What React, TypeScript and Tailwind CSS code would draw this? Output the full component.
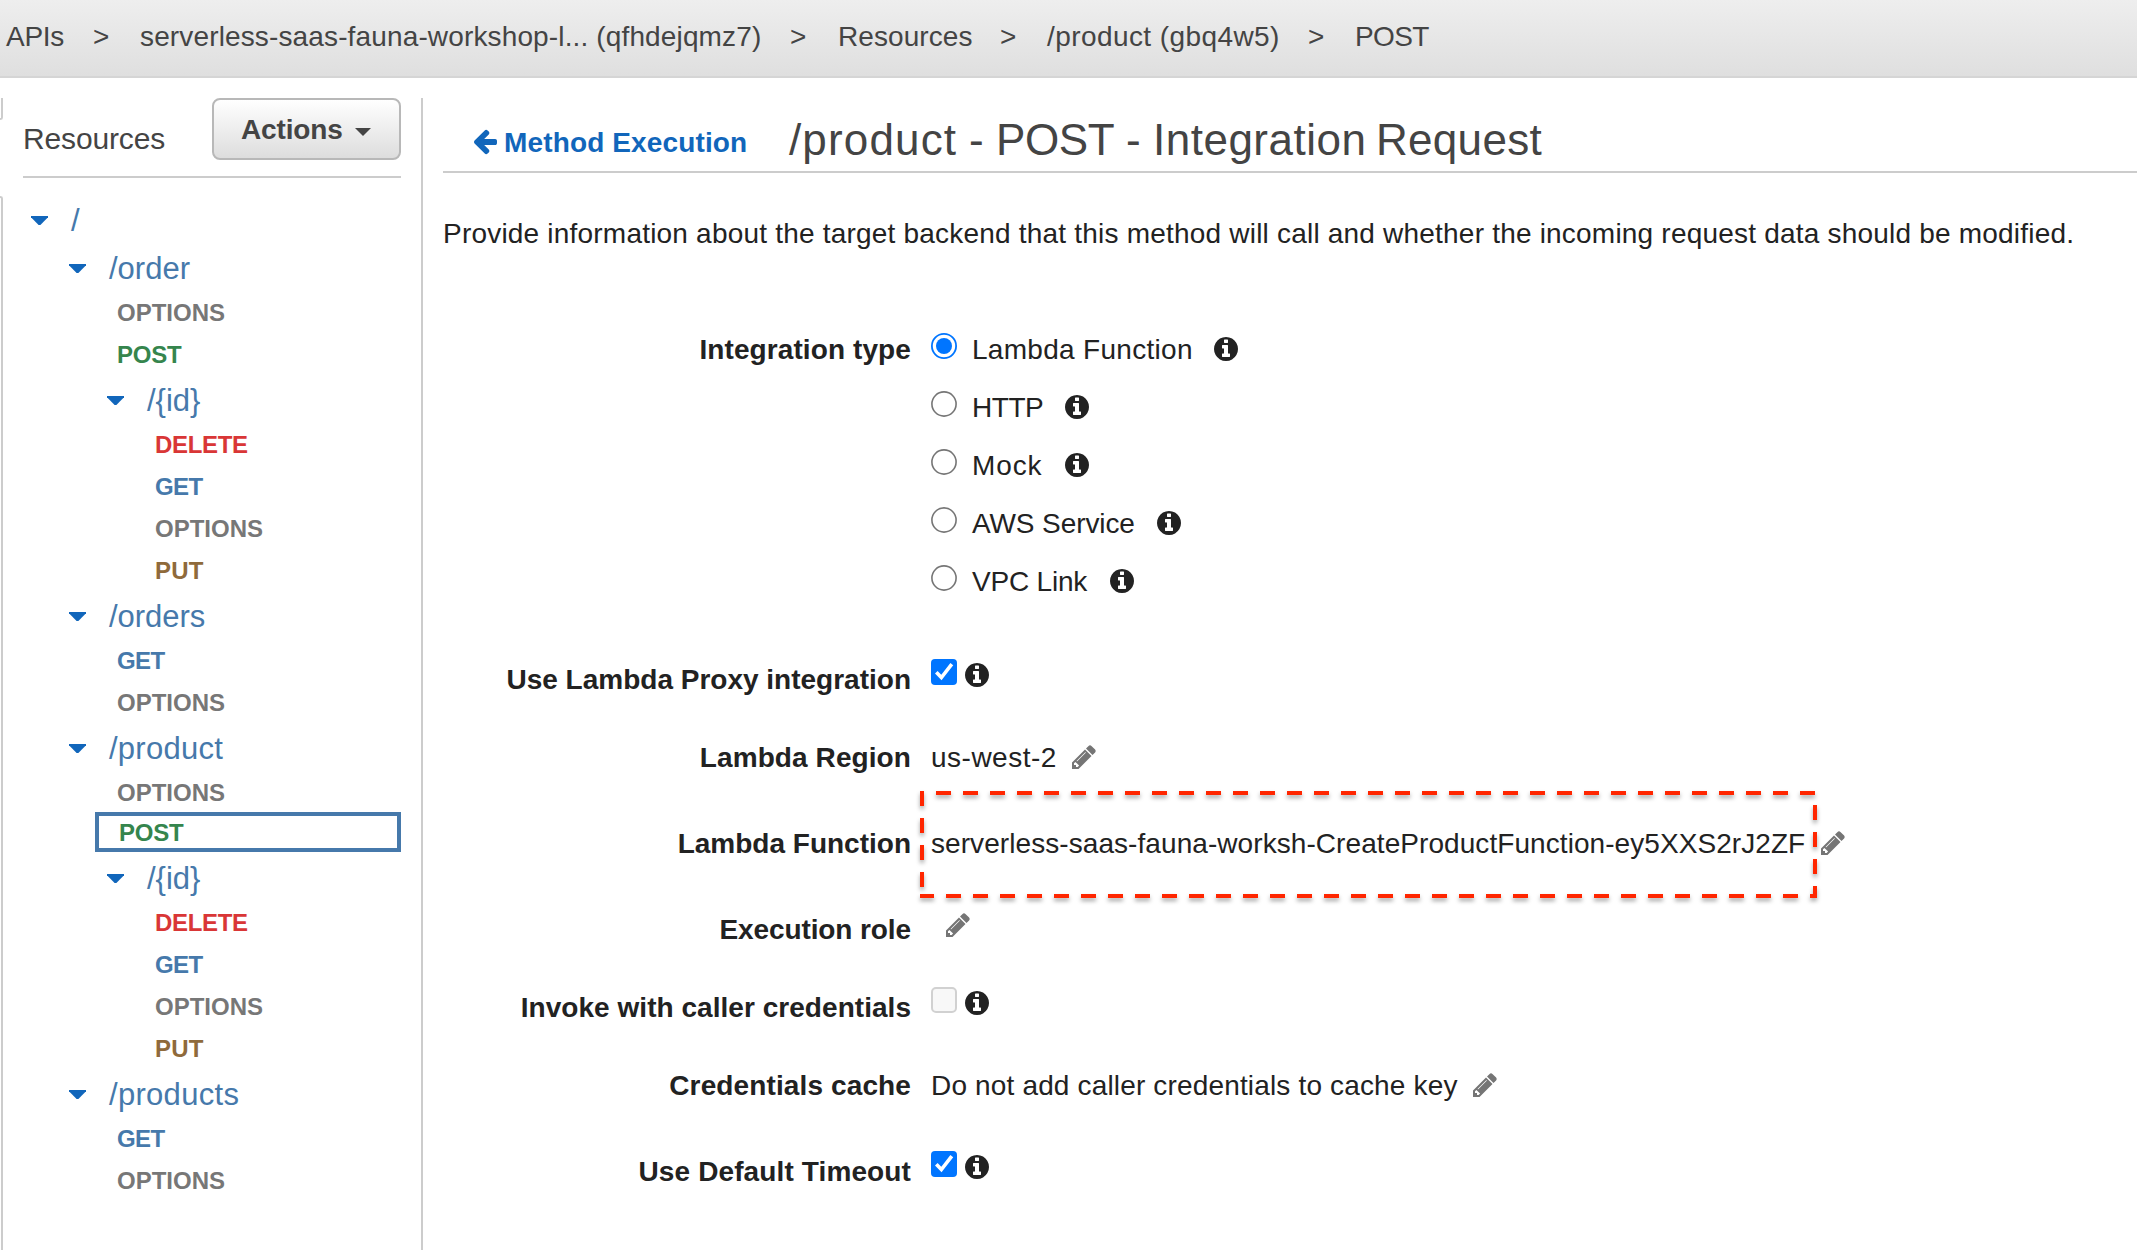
import React from "react";

const crumbs = [
  { text: "APIs", cls: "w-[87px] tracking-[-0.3px]" },
  { text: ">", cls: "w-[47px]" },
  { text: "serverless-saas-fauna-workshop-l... (qfhdejqmz7)", cls: "w-[650px] tracking-[0.14px]" },
  { text: ">", cls: "w-[48px]" },
  { text: "Resources", cls: "w-[162px] tracking-[0.08px]" },
  { text: ">", cls: "w-[47px]" },
  { text: "/product (gbq4w5)", cls: "w-[261px] tracking-[0.42px]" },
  { text: ">", cls: "w-[47px]" },
  { text: "POST", cls: "tracking-[-0.6px]" },
];

type Node = { kind: "path" | "method"; text: string; level: number; selected?: boolean };

const tree: Node[] = [
  { kind: "path", text: "/", level: 0 },
  { kind: "path", text: "/order", level: 1 },
  { kind: "method", text: "OPTIONS", level: 1 },
  { kind: "method", text: "POST", level: 1 },
  { kind: "path", text: "/{id}", level: 2 },
  { kind: "method", text: "DELETE", level: 2 },
  { kind: "method", text: "GET", level: 2 },
  { kind: "method", text: "OPTIONS", level: 2 },
  { kind: "method", text: "PUT", level: 2 },
  { kind: "path", text: "/orders", level: 1 },
  { kind: "method", text: "GET", level: 1 },
  { kind: "method", text: "OPTIONS", level: 1 },
  { kind: "path", text: "/product", level: 1 },
  { kind: "method", text: "OPTIONS", level: 1 },
  { kind: "method", text: "POST", level: 1, selected: true },
  { kind: "path", text: "/{id}", level: 2 },
  { kind: "method", text: "DELETE", level: 2 },
  { kind: "method", text: "GET", level: 2 },
  { kind: "method", text: "OPTIONS", level: 2 },
  { kind: "method", text: "PUT", level: 2 },
  { kind: "path", text: "/products", level: 1 },
  { kind: "method", text: "GET", level: 1 },
  { kind: "method", text: "OPTIONS", level: 1 },
];

const methodStyle: Record<string, string> = {
  OPTIONS: "text-[#777777]",
  POST: "text-[#35854d] tracking-[-0.2px]",
  DELETE: "text-[#d93636] tracking-[-0.33px]",
  GET: "text-[#4679ab] tracking-[-0.6px]",
  PUT: "text-[#8f6a3b] tracking-[0.2px]",
};

const pathTracking: Record<string, string> = {
  "/products": "tracking-[0.3px]",
  "/product": "tracking-[0.25px]",
  "/orders": "tracking-[-0.05px]",
};

const pathIndent = ["pl-[8px]", "pl-[46px]", "pl-[84px]"];
const methodIndent = ["pl-[56px]", "pl-[94px]", "pl-[132px]"];

const integrationTypes = [
  { text: "Lambda Function", cls: "w-[240px] tracking-[0.3px]", checked: true },
  { text: "HTTP", cls: "w-[91px] tracking-[-0.45px]" },
  { text: "Mock", cls: "w-[91px] tracking-[0.9px]" },
  { text: "AWS Service", cls: "w-[183px] tracking-[-0.1px]" },
  { text: "VPC Link", cls: "w-[136px] tracking-[-0.2px]" },
];

function Info({ className = "" }: { className?: string }) {
  return (
    <svg viewBox="0 0 1792 1792" className={`size-7 shrink-0 fill-[#222222] ${className}`}>
      <path d="M1152 1376v-160q0-14-9-23t-23-9h-96v-512q0-14-9-23t-23-9h-320q-14 0-23 9t-9 23v160q0 14 9 23t23 9h96v320h-96q-14 0-23 9t-9 23v160q0 14 9 23t23 9h448q14 0 23-9t9-23zm-128-896v-160q0-14-9-23t-23-9h-192q-14 0-23 9t-9 23v160q0 14 9 23t23 9h192q14 0 23-9t9-23zm640 416q0 209-103 385.5t-279.5 279.5-385.5 103-385.5-103-279.5-279.5-103-385.5 103-385.5 279.5-279.5 385.5-103 385.5 103 279.5 279.5 103 385.5z" />
    </svg>
  );
}

function Pencil({ className = "" }: { className?: string }) {
  return (
    <svg viewBox="0 0 1792 1792" className={`size-7 shrink-0 fill-[#757575] ${className}`}>
      <path d="M491 1536l91-91-235-235-91 91v107h128v128h107zm523-928q0-22-22-22-10 0-17 7l-542 542q-7 7-7 17 0 22 22 22 10 0 17-7l542-542q7-7 7-17zm-54-192l416 416-832 832h-416v-416zm683 96q0 53-37 90l-166 166-416-416 166-165q36-38 90-38 53 0 91 38l235 234q37 39 37 91z" />
    </svg>
  );
}

function BackArrow() {
  return (
    <svg viewBox="0 0 1792 1792" className="size-7 shrink-0 fill-[#1166bb]">
      <path d="M1664 896v128q0 53-32.5 90.5t-84.5 37.5h-704l293 294q38 36 38 90t-38 90l-75 76q-37 37-90 37-52 0-91-37l-651-652q-37-37-37-90 0-52 37-91l651-650q38-38 91-38 52 0 90 38l75 74q38 38 38 91t-38 91l-293 293h704q52 0 84.5 37.5t32.5 90.5z" />
    </svg>
  );
}

function Radio({ checked = false }: { checked?: boolean }) {
  return (
    <svg viewBox="0 0 26 26" className="mb-[6px] ml-px size-[26px] shrink-0">
      <circle cx="13" cy="13" r="12.1" fill="#fff" stroke={checked ? "#0075ff" : "#767676"} strokeWidth={checked ? 1.8 : 1.6} />
      {checked && <circle cx="13" cy="13" r="8" fill="#0075ff" />}
    </svg>
  );
}

function Checkbox({ checked = false }: { checked?: boolean }) {
  return checked ? (
    <span className="mb-[14px] ml-px size-[26px] shrink-0 rounded-[4px] bg-[#0075ff]">
      <svg viewBox="0 0 26 26" className="size-full">
        <path d="M5.3 13.3 10.4 18.6 20.8 5.2" fill="none" stroke="#fff" strokeWidth="3.6" />
      </svg>
    </span>
  ) : (
    <span className="mb-[14px] ml-px size-[26px] shrink-0 rounded-[5px] border-2 border-[#d1d1d1] bg-[#f8f8f8]" />
  );
}

function TreeRow({ node }: { node: Node }) {
  if (node.kind === "path") {
    return (
      <div className={`flex h-12 items-center gap-[23px] ${pathIndent[node.level]}`}>
        <svg viewBox="0 0 17 9" className="h-[9px] w-[17px] fill-[#1166bb]">
          <path d="M0 0H17V1.2L9.4 9H7.6L0 1.2Z" />
        </svg>
        <span className={`mt-0.5 text-[31px] leading-10 text-[#4679ab] ${pathTracking[node.text] ?? ""}`}>{node.text}</span>
      </div>
    );
  }
  if (node.selected) {
    return (
      <div className="-mt-0.5 mb-0.5 ml-[72px] flex h-10 items-center border-4 border-[#4679ab] pl-[20px]">
        <span className={`mt-px text-[24px] leading-7 font-bold ${methodStyle[node.text]}`}>{node.text}</span>
      </div>
    );
  }
  return (
    <div className={`h-[42px] text-[24px] leading-[41px] font-bold ${methodIndent[node.level]} ${methodStyle[node.text]}`}>
      {node.text}
    </div>
  );
}

function Row({ label, labelCls = "", cls = "h-[78px]", children }: { label?: string; labelCls?: string; cls?: string; children: React.ReactNode }) {
  return (
    <div className={`grid grid-cols-[468px_1fr] gap-x-[19px] ${cls}`}>
      <div className={`flex items-center justify-end pt-0.5 font-bold ${labelCls}`}>{label}</div>
      <div className="relative flex items-center">{children}</div>
    </div>
  );
}

export default function App() {
  return (
    <div className="flex h-[1250px] w-[2137px] flex-col overflow-hidden bg-white font-['Liberation_Sans',Arial,sans-serif] text-[28px] leading-8 whitespace-nowrap text-[#222222]">
      <header className="h-[78px] shrink-0 border-b-2 border-[#d5d5d5] bg-linear-to-b from-[#eeeeee] to-[#dfdfdf]">
        <nav className="flex h-[74px] items-center pl-[6px] text-[#444444]">
          {crumbs.map((c, i) => (
            <span key={i} className={`shrink-0 ${c.cls}`}>{c.text}</span>
          ))}
        </nav>
      </header>

      <div className="flex flex-1 pt-5">
        <div className="flex w-[3px] flex-col gap-[76px]">
          <div className="h-[22px] rounded-br-[4px] border-r-2 border-b-2 border-[#cccccc]" />
          <div className="flex-1 rounded-tr-[4px] border-t-2 border-r-2 border-[#cccccc]" />
        </div>

        <aside className="w-[420px] shrink-0 border-r-2 border-[#cccccc] px-5">
          <div className="flex h-20 items-start justify-between border-b-2 border-[#cccccc] text-[#444444]">
            <h2 className="pt-[25px] text-[30px] leading-8 tracking-[-0.15px]">Resources</h2>
            <button className="flex h-[62px] w-[189px] items-center gap-[12px] rounded-[8px] border-2 border-[#b8b8b8] bg-linear-to-b from-white to-[#dddddd] pl-[27px] font-bold">
              <span className="mt-0.5 tracking-[-0.15px]">Actions</span>
              <svg viewBox="0 0 16 8" className="mt-[5px] h-2 w-4 fill-[#444444]">
                <path d="M0 0H16L8 8Z" />
              </svg>
            </button>
          </div>
          <div className="pt-[18px]">
            {tree.map((n, i) => (
              <TreeRow key={i} node={n} />
            ))}
          </div>
        </aside>

        <main className="flex-1 pl-5">
          <div className="flex h-[75px] items-start border-b-2 border-[#cccccc] pl-[28px]">
            <a className="flex w-[318px] items-start gap-[5px] pt-[29px] font-bold text-[#1166bb]">
              <BackArrow />
              <span className="tracking-[0.14px]">Method Execution</span>
            </a>
            <h1 className="flex pt-[18px] text-[44px] leading-[48px] text-[#444444]">
              <span className="w-[180px] tracking-[1.15px]">/product </span>
              <span className="w-[27px]">- </span>
              <span className="w-[130px] tracking-[-0.4px]">POST </span>
              <span className="w-[27px]">- </span>
              <span className="w-[223px] tracking-[0.5px]">Integration </span>
              <span className="tracking-[0.3px]">Request</span>
            </h1>
          </div>
          <p className="mt-[45px] tracking-[0.205px]">
            Provide information about the target backend that this method will call and whether the incoming request data should be modified.
          </p>

          <div className="mt-[70px]">
            {integrationTypes.map((t, i) => (
              <Row key={t.text} label={i === 0 ? "Integration type" : ""} labelCls="tracking-[0.1px]" cls="h-[58px]">
                <Radio checked={t.checked} />
                <span className={`mt-0.5 ml-[15px] ${t.cls}`}>{t.text}</span>
                <Info />
              </Row>
            ))}
          </div>

          <Row label="Use Lambda Proxy integration" cls="mt-[30px] h-[78px]">
            <Checkbox checked />
            <Info className="mb-2 ml-[6px]" />
          </Row>
          <Row label="Lambda Region" labelCls="tracking-[0.09px]">
            <span className="mt-0.5 w-[140px] pl-px tracking-[0.5px]">us-west-2</span>
            <Pencil />
          </Row>
          <Row label="Lambda Function" cls="h-[94px]">
            <span className="mt-0.5 w-[889px] pl-px tracking-[0.07px]">serverless-saas-fauna-worksh-CreateProductFunction-ey5XXS2rJ2ZF</span>
            <Pencil />
            <svg viewBox="915 786 907 122" className="pointer-events-none absolute -top-[10px] -left-[15px] h-[122px] w-[907px] drop-shadow-[0_3px_2px_rgba(0,0,0,0.35)]">
              <path d="M922 896V793H1815V896H920" fill="none" stroke="#ff2600" strokeWidth="4" strokeDasharray="15 12" strokeDashoffset="18" />
            </svg>
          </Row>
          <Row label="Execution role" labelCls="tracking-[-0.1px]">
            <Pencil className="mb-2 ml-[14px]" />
          </Row>
          <Row label="Invoke with caller credentials" labelCls="tracking-[0.04px]">
            <Checkbox />
            <Info className="mb-2 ml-[6px]" />
          </Row>
          <Row label="Credentials cache" labelCls="tracking-[0.12px]">
            <span className="mt-0.5 w-[541px] pl-px tracking-[0.16px]">Do not add caller credentials to cache key</span>
            <Pencil />
          </Row>
          <Row label="Use Default Timeout" labelCls="tracking-[0.12px]" cls="mt-2 h-[78px]">
            <Checkbox checked />
            <Info className="mb-2 ml-[6px]" />
          </Row>
        </main>
      </div>
    </div>
  );
}
